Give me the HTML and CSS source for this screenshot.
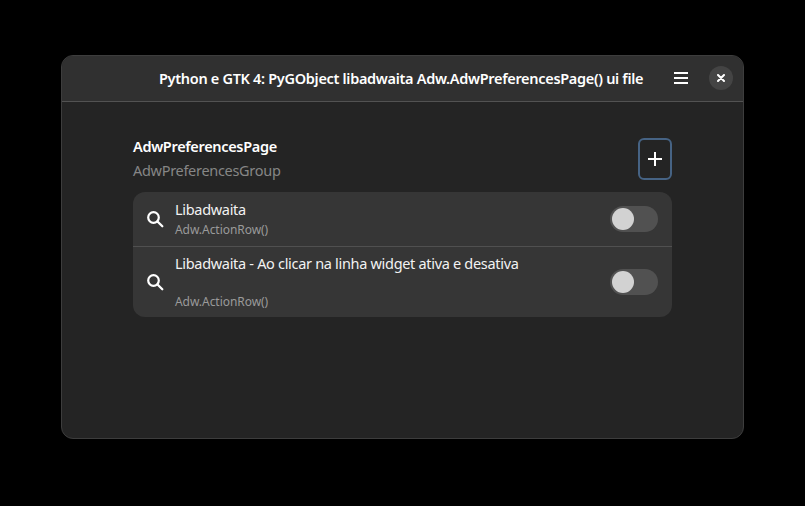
FILE: index.html
```html
<!DOCTYPE html>
<html lang="pt-BR">
<head>
<meta charset="utf-8">
<title>Adw.AdwPreferencesPage</title>
<link rel="stylesheet" href="styles.css">
</head>
<body>
<main class="window">
  <header class="headerbar">
    <h1 class="title">Python e GTK 4: PyGObject libadwaita Adw.AdwPreferencesPage() ui file</h1>
    <button class="menu" aria-label="Menu"><svg width="14" height="12" viewBox="0 0 14 12"><path d="M0 1h14M0 6h14M0 11h14" stroke="#fff" stroke-width="2"/></svg></button>
    <button class="close" aria-label="Fechar"><svg width="8" height="8" viewBox="0 0 8 8"><path d="M1 1l6 6M7 1L1 7" stroke="#fff" stroke-width="2" stroke-linecap="round"/></svg></button>
  </header>
  <section class="page">
    <div class="group-header">
      <div class="group-labels">
        <h2 class="group-title">AdwPreferencesPage</h2>
        <p class="group-description">AdwPreferencesGroup</p>
      </div>
      <button class="add" aria-label="Adicionar"><svg width="14" height="14" viewBox="0 0 14 14"><path d="M7 0v14M0 7h14" stroke="#fff" stroke-width="2"/></svg></button>
    </div>
    <div class="list">
      <div class="row">
        <svg class="search" width="17" height="17" viewBox="0 0 17 17"><circle cx="6.5" cy="6.5" r="5.3" fill="none" stroke="#fff" stroke-width="2.2"/><path d="M10.5 10.5l4.8 4.8" stroke="#fff" stroke-width="2.3" stroke-linecap="round"/></svg>
        <div class="labels"><span class="row-title">Libadwaita</span><span class="row-subtitle">Adw.ActionRow()</span></div>
        <span class="switch"></span>
      </div>
      <div class="row tall">
        <svg class="search" width="17" height="17" viewBox="0 0 17 17"><circle cx="6.5" cy="6.5" r="5.3" fill="none" stroke="#fff" stroke-width="2.2"/><path d="M10.5 10.5l4.8 4.8" stroke="#fff" stroke-width="2.3" stroke-linecap="round"/></svg>
        <div class="labels"><span class="row-title">Libadwaita - Ao clicar na linha widget ativa e desativa</span><span class="row-subtitle">Adw.ActionRow()</span></div>
        <span class="switch"></span>
      </div>
    </div>
  </section>
</main>
</body>
</html>
```
FILE: styles.css
```css
* { box-sizing: border-box; }
body {
  margin: 0;
  height: 506px;
  padding: 55px 61px 67px;
  background: #000;
  color: #fff;
  font-family: "Noto Sans", sans-serif;
  overflow: hidden;
}
h1, h2, p { margin: 0; }
button { padding: 0; border: 0; background: none; display: flex; align-items: center; justify-content: center; }
svg { display: block; }
.window {
  width: 683px;
  height: 384px;
  background: #242424;
  border: 1px solid #3d3d3d;
  border-radius: 12px;
  overflow: hidden;
}
.headerbar {
  display: flex;
  align-items: center;
  height: 46px;
  padding: 0 10px 1px 97px;
  background: #303030;
  border-bottom: 1px solid #525252;
}
.title { flex: 1; font-size: 14.5px; line-height: 20px; font-weight: 600; letter-spacing: -0.31px; white-space: nowrap; }
.menu { width: 34px; height: 34px; margin-right: 11px; }
.close { width: 24px; height: 24px; border-radius: 50%; background: #444; }
.page { width: 539px; margin: 36px 0 0 71px; }
.group-header { display: flex; justify-content: space-between; height: 42px; margin-bottom: 12px; }
.group-labels { margin-top: -1px; }
.group-title { font-size: 14.5px; line-height: 19px; font-weight: 600; letter-spacing: -0.33px; white-space: nowrap; }
.group-description { margin-top: 5px; font-size: 14.5px; line-height: 19px; letter-spacing: -0.3px; color: #868686; white-space: nowrap; }
.add { width: 34px; height: 42px; border: 2px solid #466384; border-radius: 6px; }
.list { border-radius: 12px; background: #363636; overflow: hidden; }
.row { display: flex; align-items: center; height: 54px; padding: 0 14px; }
.tall { height: 71px; border-top: 1px solid #505050; }
.search { margin-right: 11px; }
.labels { flex: 1; display: flex; flex-direction: column; justify-content: space-between; height: 40px; padding-bottom: 1px; }
.tall .labels { height: 58px; }
.row-title { font-size: 14.5px; line-height: 20px; letter-spacing: -0.31px; color: #f2f2f2; white-space: nowrap; }
.row-subtitle { font-size: 12px; line-height: 16px; letter-spacing: -0.05px; color: #9a9a9a; white-space: nowrap; }
.switch { width: 48px; height: 26px; padding: 2px; border-radius: 13px; background: #515151; }
.switch::before { content: ""; display: block; width: 22px; height: 22px; border-radius: 50%; background: #d2d2d2; }
```
